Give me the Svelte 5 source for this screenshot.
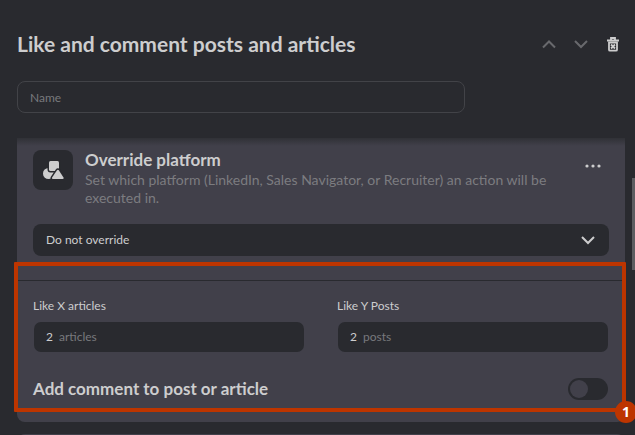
<script>
  let name = $state('');
  let platform = $state('none');
  let articles = $state('2');
  let posts = $state('2');
  let addComment = $state(false);
</script>

<main class="page">
  <header class="top">
    <h1>Like and comment posts and articles</h1>
    <div class="actions">
      <button type="button" class="dim" aria-label="Move up">
        <svg width="16" height="16" viewBox="0 0 16 16"><path d="M2 11.500 8 5.500l6 6" /></svg>
      </button>
      <button type="button" class="dim" aria-label="Move down">
        <svg width="16" height="16" viewBox="0 0 16 16"><path d="M2 5l6 6 6-6" /></svg>
      </button>
      <button type="button" aria-label="Delete">
        <svg class="trash" width="16" height="16" viewBox="0 0 16 16">
          <path d="M6 3.500V2h4v1.500M2 4.500h12" />
          <path d="M4 6.500h8v7.200q0 1-1 1H5q-1 0-1-1Z" />
          <path d="m6 8.500 4 4m0-4-4 4" />
        </svg>
      </button>
    </div>
  </header>

  <input class="name" type="text" placeholder="Name" aria-label="Name" bind:value={name} />

  <article class="card">
    <section class="override">
      <div class="intro">
        <span class="tile">
          <svg width="22" height="20" viewBox="0 0 22 20" aria-hidden="true">
            <circle cx="6.500" cy="13.500" r="5.500" />
            <rect x="7" y="1" width="10" height="10" rx="1.500" />
            <path d="M15 10.300q.9-1.300 1.800 0l4.700 7.300q.6 1.400-.9 1.400h-9.600q-1.500 0-.9-1.400Z" />
          </svg>
        </span>
        <div class="copy">
          <h2>Override platform</h2>
          <p>Set which platform (LinkedIn, Sales Navigator, or Recruiter) an action will be executed in.</p>
        </div>
        <button type="button" class="more" aria-label="More options">
          <svg width="16" height="4" viewBox="0 0 16 4"><circle cx="2" cy="2" r="1.600" /><circle cx="8" cy="2" r="1.600" /><circle cx="14" cy="2" r="1.600" /></svg>
        </button>
      </div>
      <div class="select">
        <select aria-label="Override platform" bind:value={platform}>
          <option value="none">Do not override</option>
          <option value="linkedin">LinkedIn</option>
          <option value="navigator">Sales Navigator</option>
          <option value="recruiter">Recruiter</option>
        </select>
        <svg width="16" height="16" viewBox="0 0 16 16" aria-hidden="true"><path d="M2 5l6 6 6-6" /></svg>
      </div>
    </section>

    <section class="settings">
      <div class="fields">
        <div class="field">
          <label for="articles">Like X articles</label>
          <div class="box"><input id="articles" type="text" inputmode="numeric" bind:value={articles} /><span>articles</span></div>
        </div>
        <div class="field">
          <label for="posts">Like Y Posts</label>
          <div class="box"><input id="posts" type="text" inputmode="numeric" bind:value={posts} /><span>posts</span></div>
        </div>
      </div>
      <div class="comment">
        <label for="comment">Add comment to post or article</label>
        <input id="comment" type="checkbox" role="switch" bind:checked={addComment} />
      </div>
      <div class="marker"><span>1</span></div>
    </section>
  </article>

  <div class="next"></div>
  <div class="scroll"></div>
</main>

<style>
  :global(body) { margin: 0; background: #292a2f; }
  * { box-sizing: border-box; }
  .page {
    position: relative;
    height: 100vh;
    overflow: hidden;
    padding: 28px 10px 0 17px;
    background: #292a2f;
    color: #cdcdce;
    font-family: Lato, "Liberation Sans", sans-serif;
    font-size: 12px;
    line-height: 18px;
  }
  h1, h2, p { margin: 0; }
  button { display: flex; padding: 0; border: 0; background: none; color: inherit; }
  svg { display: block; fill: none; stroke: currentColor; stroke-width: 2; }
  input, select { font: inherit; color: inherit; }
  .top { display: flex; justify-content: space-between; align-items: center; height: 32px; }
  h1 { font-size: 21px; line-height: 32px; font-weight: 700; }
  .actions { display: flex; gap: 16px; padding-right: 4px; }
  .dim { color: #68696d; }
  .trash { stroke-width: 1.800; }
  .name {
    display: block;
    width: 448px;
    max-width: 100%;
    height: 32px;
    margin: 21px 0 25px;
    padding: 0 12px;
    border: 1px solid #424348;
    border-radius: 8px;
    background: transparent;
  }
  .name::placeholder { color: #78797d; opacity: 1; }
  .card {
    border-radius: 0 0 8px 8px;
    background: linear-gradient(#303136, #41404a 8px);
  }
  .override { padding: 12px 16px 24px; }
  .intro { display: flex; gap: 12px; }
  .tile {
    flex: none;
    display: flex;
    align-items: center;
    justify-content: center;
    width: 40px;
    height: 40px;
    border-radius: 8px;
    background: #292a2f;
  }
  .tile svg { fill: #cdcdce; stroke: #292a2f; stroke-width: 3; stroke-linejoin: round; paint-order: stroke; }
  .copy { flex: 1; }
  h2 { font-size: 17px; line-height: 20px; font-weight: 700; }
  p { font-size: 14px; color: #7c7c80; padding-top: 1px; }
  .more { align-self: flex-start; margin: 14px 8px 0 0; }
  .more svg { fill: currentColor; stroke: none; }
  .select { position: relative; margin-top: 17px; }
  select {
    display: block;
    appearance: none;
    width: 100%;
    height: 32px;
    padding: 0 40px 0 13px;
    border: 0;
    border-radius: 8px;
    background: #292a2f;
  }
  .select svg { position: absolute; right: 13px; top: 8px; pointer-events: none; }
  .settings { position: relative; padding: 16px 16px 22px; border-top: 1px solid #292a2f; }
  .fields { display: flex; gap: 32px; }
  .field { flex: 1; }
  .field label { display: block; }
  .box {
    display: flex;
    align-items: center;
    gap: 4px;
    height: 30px;
    margin: 7px 1px 0;
    padding: 0 12px;
    border-radius: 7px;
    background: #292a2f;
    color: #78797d;
  }
  .box input { width: 9px; padding: 0; border: 0; background: none; color: #cdcdce; }
  .comment { display: flex; justify-content: space-between; align-items: center; padding: 26px 1px 0 0; }
  .comment label { font-size: 17px; line-height: 20px; font-weight: 700; }
  .comment input {
    appearance: none;
    display: flex;
    align-items: center;
    width: 40px;
    height: 22px;
    margin: 0;
    padding: 2px;
    border-radius: 11px;
    background: #292a2f;
  }
  .comment input::before { content: ""; width: 18px; height: 18px; border-radius: 50%; background: #41404a; }
  .comment input:checked { justify-content: flex-end; }
  .marker { position: absolute; inset: -19px -1px 10px -3px; border: 4px solid #bd3500; border-radius: 1px; pointer-events: none; }
  .marker span {
    position: absolute;
    right: -15px;
    bottom: -15px;
    width: 22px;
    height: 22px;
    border-radius: 50%;
    background: #bd3500;
    color: #fff;
    font: 700 14px/22px "Open Sans", sans-serif;
    text-align: center;
  }
  .next { height: 40px; margin-top: 12px; border-radius: 8px; background: #41404a; }
  .scroll { position: absolute; right: 0; top: 178px; width: 3px; height: 92px; background: #5c5d61; }
</style>
